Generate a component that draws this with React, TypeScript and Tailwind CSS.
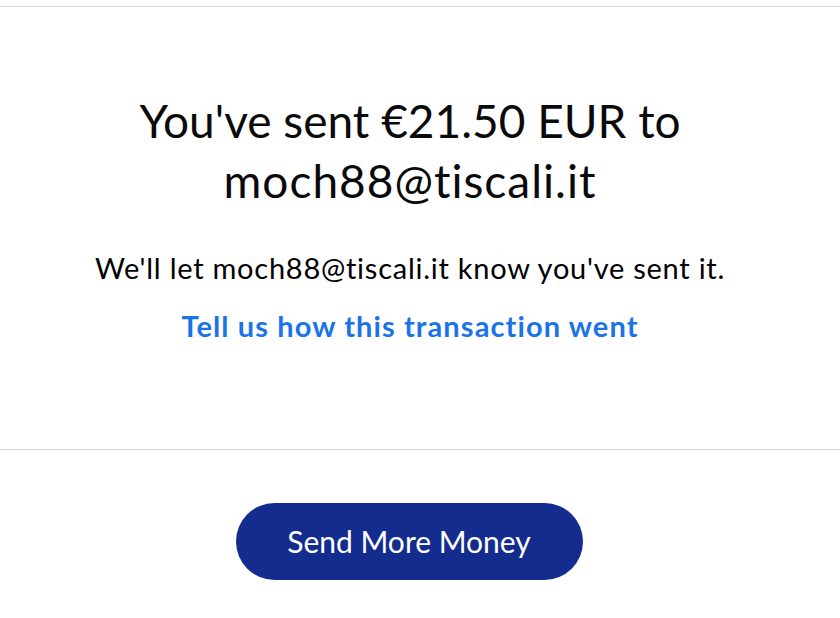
export default function App() {
  return (
    <div className="min-h-[618px] bg-white font-['Lato','Open_Sans',sans-serif] text-[#000] [font-variant-ligatures:none]">
      <div className="pt-[6px]">
        <div className="h-px bg-[#d6d6cc]" />
      </div>
      <div className="flex flex-col items-center pr-[20px] pt-[84px] text-center">
        <h1 className="w-[600px] text-[46px] leading-[60px] font-normal text-[#0a0a0a]">
          You've sent €21.50 EUR to <span className="tracking-[1px]">moch88@tiscali.it</span>
        </h1>
        <p className="mt-[38px] text-[29px] leading-[38px] tracking-[0.75px]">
          We'll let moch88@tiscali.it know you've sent it.
        </p>
        <a href="#" className="mt-[20px] text-[29px] leading-[38px] font-bold tracking-[1.1px] text-[#1a73e8]">
          Tell us how this transaction went
        </a>
      </div>
      <div className="mt-[104px] h-px bg-[#d6d3cc]" />
      <div className="flex justify-center pr-[22px] pt-[53px]">
        <button className="h-[77px] w-[347px] rounded-full bg-[#142c8e] text-[30px] text-white">
          Send More Money
        </button>
      </div>
    </div>
  );
}
